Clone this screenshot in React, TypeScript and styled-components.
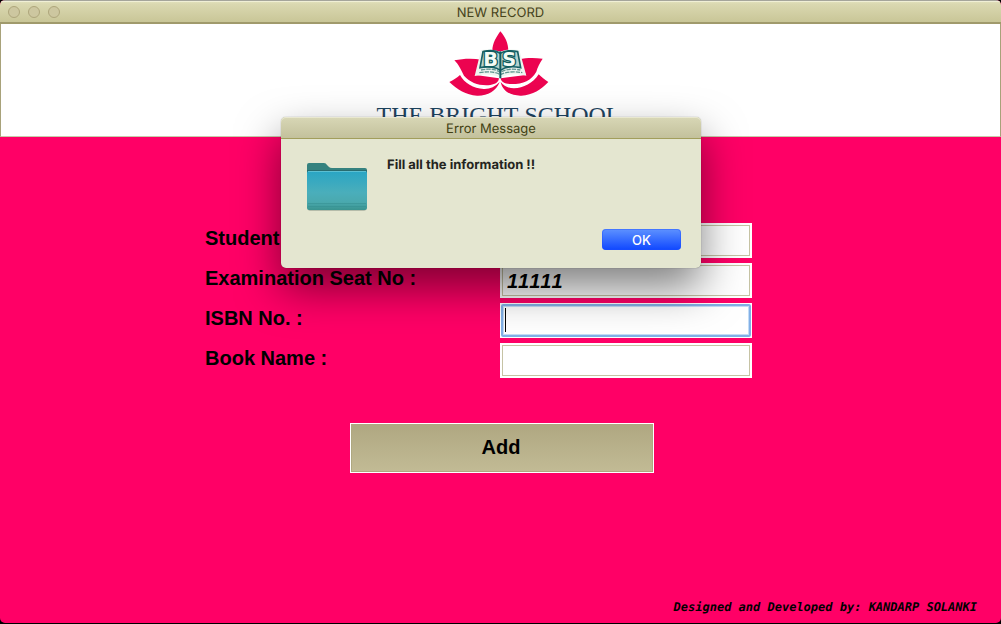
import React from "react";
import styled, { createGlobalStyle } from "styled-components";

const uiFont = `Inter, "Liberation Sans", sans-serif`;
const formFont = `"Liberation Sans", Arial, sans-serif`;

const GlobalStyle = createGlobalStyle`
  *, *::before, *::after { box-sizing: border-box; }
  body { margin: 0; background: #000; }
`;

const Window = styled.div`
  position: relative;
  display: flex;
  flex-direction: column;
  min-height: calc(100vh - 1px);
  border-radius: 5px;
  overflow: hidden;
  background: #ff0066;
`;

const TitleBar = styled.header`
  position: relative;
  display: flex;
  align-items: center;
  justify-content: center;
  height: 24px;
  padding-top: 2px;
  border-top: 1px solid #a5a59b;
  border-bottom: 2px solid #a09a6c;
  background: linear-gradient(#e3e2bd, #dad8b1 15%, #c9c697);
  box-shadow: inset 0 1px 0 #f0efd6;
`;

const WindowTitle = styled.h1`
  margin: 0;
  font: 400 13px/20px ${uiFont};
  text-rendering: geometricPrecision;
  color: #46431b;
`;

const WindowControls = styled.div`
  position: absolute;
  top: 5px;
  left: 8px;
  display: flex;
  gap: 8px;
`;

const ControlDot = styled.button`
  width: 12px;
  height: 12px;
  padding: 0;
  border: 1px solid #aea67b;
  border-radius: 50%;
  background: #cdc7a0;
`;

const Banner = styled.div`
  display: flex;
  flex-direction: column;
  align-items: center;
  height: 113px;
  padding: 7px 4px 0 0;
  overflow: hidden;
  border: 1px solid #a8a27a;
  border-top: 0;
  border-bottom-color: #c9c9a8;
  background: #fff;
`;

const SchoolName = styled.p`
  margin: 1px 0 0;
  font: 400 24px/32px "Liberation Serif", "Times New Roman", serif;
  font-kerning: none;
  color: #1e4460;
`;

const Content = styled.main`
  display: flex;
  flex: 1;
  flex-direction: column;
  padding: 86px 24px 8px 205px;
`;

const RecordForm = styled.form`
  display: flex;
  flex-direction: column;
  gap: 5px;
`;

const FieldRow = styled.div`
  display: grid;
  grid-template-columns: 295px 252px;
`;

const FieldLabel = styled.label`
  font: 700 20px/30px ${formFont};
  color: #000;
`;

const FieldFrame = styled.div<{ $focused?: boolean }>`
  display: flex;
  height: 35px;
  padding: ${(p) => (p.$focused ? 1 : 2)}px;
  background: #fff;
`;

const TextField = styled.input<{ $focused?: boolean }>`
  width: 100%;
  min-width: 0;
  padding: ${(p) => (p.$focused ? "0 3px" : "0 4px")};
  border: ${(p) => (p.$focused ? "2px solid #82b0e6" : "1px solid #c6c3a4")};
  border-radius: ${(p) => (p.$focused ? 2 : 0)}px;
  outline: ${(p) => (p.$focused ? "1px solid #c3dcf6" : "none")};
  outline-offset: -3px;
  background: #fff;
  color: #000;
  font: italic 700 20px/28px ${formFont};
  font-kerning: none;
`;

const Caret = styled.span`
  position: absolute;
  top: 5px;
  left: 5px;
  width: 1px;
  height: 24px;
  background: #000;
`;

const FieldCell = styled.div`
  position: relative;
`;

const AddButton = styled.button`
  width: 304px;
  height: 50px;
  margin: 40px 0 0 145px;
  padding: 0 2px 2px 0;
  border: 1px solid #fff;
  background: linear-gradient(#afa781, #c2bb95);
  box-shadow: inset 0 0 0 1px #aea880;
  color: #000;
  font: 700 20px/24px ${formFont};
`;

const Credit = styled.footer`
  margin-top: auto;
  text-align: right;
  font: italic 700 12px/16px "DejaVu Sans Mono", "Liberation Mono", monospace;
  text-rendering: geometricPrecision;
  color: #000;
`;

const Dialog = styled.section`
  position: absolute;
  top: 117px;
  left: 281px;
  width: 420px;
  height: 151px;
  border-radius: 5px;
  background: #e4e6d0;
  box-shadow: 0 0 1px rgba(0, 0, 0, 0.5), 0 20px 44px rgba(0, 0, 0, 0.5);
`;

const DialogTitle = styled.h2`
  margin: 0;
  height: 22px;
  border-bottom: 1px solid #a29e5c;
  border-radius: 5px 5px 0 0;
  background: linear-gradient(#d8d7b6, #c3c19c);
  box-shadow: inset 0 1px 0 #e9e8d0;
  text-align: center;
  font: 400 13px/24px ${uiFont};
  text-rendering: geometricPrecision;
  color: #423f12;
`;

const DialogBody = styled.div`
  display: flex;
  gap: 20px;
  padding: 16px 20px 0 26px;
`;

const Message = styled.p`
  margin: 0;
  font: 700 13px/20px ${uiFont};
  text-rendering: geometricPrecision;
  color: #242520;
`;

const DialogActions = styled.div`
  display: flex;
  justify-content: flex-end;
  padding: 18px 20px 0;
`;

const OkButton = styled.button`
  width: 79px;
  height: 21px;
  padding: 0;
  border: 0;
  border-radius: 4px;
  background: linear-gradient(#5e92ff, #0f47ff);
  box-shadow: inset 0 0 0 1px rgba(30, 80, 255, 0.4);
  color: #fff;
  font: 500 13px/20px ${uiFont};
`;

function SchoolLogo() {
  return (
    <svg width="100" height="67" viewBox="54 31 300 201" aria-hidden="true">
      <g fill="#ec0350">
        <path d="M208 32C197 48 184 66 184 92H232C232 66 222 48 208 32Z" />
        <path d="M70 119C98 113 126 113 153 117L134 163L204 173C203 184 194 191 178 193C145 196 119 187 99 165C91 151 84 132 70 119Z" />
        <path d="M335 114C310 111 287 111 264 116L285 163L209 173C210 183 220 190 237 190C275 191 301 180 316 153C320 140 325 128 335 114Z" />
        <path d="M55 184C67 179 78 171 87 163C99 187 128 203 158 205C176 206 192 199 206 184C195 212 169 226 138 225C105 223 79 207 55 184Z" />
        <path d="M352 184C340 177 330 168 323 161C306 188 277 202 249 203C231 203 218 195 209 184C215 212 239 226 271 225C306 223 330 207 352 184Z" />
      </g>
      <path d="M150 88C172 84 196 87 208 94C220 87 244 84 265 88L286 165C258 158 226 160 208 172C190 160 160 158 131 166Z" fill="#eef5f0" />
      <path d="M156 93C176 88 197 90 208 98C220 90 242 88 260 93L269 141C245 136 221 139 208 149C195 139 170 136 147 141Z" fill="#b5d2cc" stroke="#176266" strokeWidth="5" />
      <path d="M150 148C174 143 195 146 208 155C221 146 244 143 268 148M145 156C172 151 194 154 208 162C222 154 246 151 274 156" fill="none" stroke="#609590" strokeWidth="4" strokeDasharray="13 3" />
      <path d="M208 92V173" stroke="#105b60" strokeWidth="6" />
      <g fontFamily="DejaVu Sans, sans-serif" fontSize="58" fontWeight="700" fill="#f4fbf5" stroke="#105d60" strokeWidth="8" paintOrder="stroke">
        <text x="157" y="136">B</text>
        <text x="214" y="136">S</text>
      </g>
    </svg>
  );
}

function FolderIcon() {
  return (
    <svg width="60" height="56" viewBox="0 0 60 56" aria-hidden="true">
      <defs>
        <linearGradient id="folder-front" x1="0" y1="0" x2="0" y2="1">
          <stop offset="0" stopColor="#29a5c4" />
          <stop offset="0.55" stopColor="#4aaebb" />
          <stop offset="0.8" stopColor="#4aa9ae" />
          <stop offset="1" stopColor="#39938f" />
        </linearGradient>
      </defs>
      <rect x="1" y="50" width="58" height="6" rx="2" fill="#b5bcaa" />
      <path d="M0 11V10Q0 8 2 8H17Q19 8 20 10L22 12Q23 13 25 13H58Q60 13 60 15V30H0Z" fill="#35827f" />
      <path d="M0 15H60V20H0Z" fill="#286c70" />
      <path d="M0 18Q0 16 2 16H58Q60 16 60 18V53Q60 55 58 55H2Q0 55 0 53Z" fill="url(#folder-front)" />
      <path d="M1 16.5H59" stroke="#5bbfd2" />
      <path d="M1 48.5H59M1 51.5H59" stroke="#348f91" opacity="0.5" />
    </svg>
  );
}

interface Field {
  id: string;
  label: string;
  value?: string;
  focused?: boolean;
}

const fields: Field[] = [
  { id: "student", label: "Student" },
  { id: "seat", label: "Examination Seat No :", value: "11111" },
  { id: "isbn", label: "ISBN No. :", focused: true },
  { id: "book", label: "Book Name :" },
];

export default function App() {
  return (
    <>
      <GlobalStyle />
      <Window>
        <TitleBar>
          <WindowControls>
            <ControlDot aria-label="Close" />
            <ControlDot aria-label="Minimize" />
            <ControlDot aria-label="Zoom" />
          </WindowControls>
          <WindowTitle>NEW RECORD</WindowTitle>
        </TitleBar>
        <Banner>
          <SchoolLogo />
          <SchoolName>THE BRIGHT SCHOOL</SchoolName>
        </Banner>
        <Content>
          <RecordForm onSubmit={(e) => e.preventDefault()}>
            {fields.map((f) => (
              <FieldRow key={f.id}>
                <FieldLabel htmlFor={f.id}>{f.label}</FieldLabel>
                <FieldCell>
                  <FieldFrame $focused={f.focused}>
                    <TextField id={f.id} type="text" defaultValue={f.value} $focused={f.focused} />
                  </FieldFrame>
                  {f.focused && <Caret />}
                </FieldCell>
              </FieldRow>
            ))}
            <AddButton type="submit">Add</AddButton>
          </RecordForm>
          <Credit>Designed and Developed by: KANDARP SOLANKI</Credit>
        </Content>
        <Dialog role="alertdialog" aria-labelledby="dialog-title" aria-describedby="dialog-message">
          <DialogTitle id="dialog-title">Error Message</DialogTitle>
          <DialogBody>
            <FolderIcon />
            <Message id="dialog-message">Fill all the information !!</Message>
          </DialogBody>
          <DialogActions>
            <OkButton type="button">OK</OkButton>
          </DialogActions>
        </Dialog>
      </Window>
    </>
  );
}
